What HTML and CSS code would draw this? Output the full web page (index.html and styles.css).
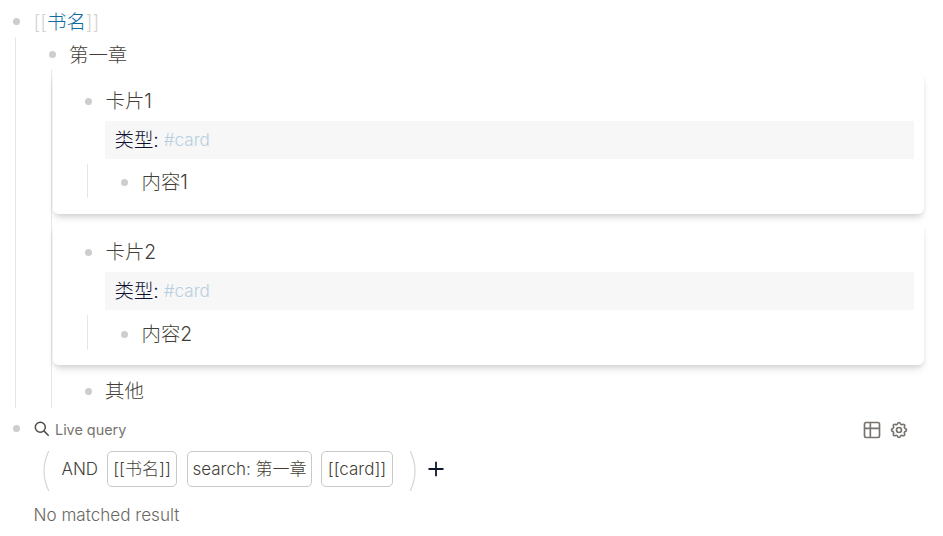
FILE: index.html
```
<!DOCTYPE html>
<html lang="zh-CN">
<head>
    <meta charset="UTF-8">
    <meta name="viewport" content="width=device-width, initial-scale=1.0">
    <title>书名</title>
    <link rel="stylesheet" href="styles.css">
</head>
<body>
    <div class="page">
        <div class="row row-top">
            <span class="bullet"></span>
            <div class="text"><span class="bracket">[[</span><a class="page-ref">书名</a><span class="bracket">]]</span></div>
        </div>
        <div class="children children-root">
            <div class="row row-chapter">
                <span class="bullet"></span>
                <div class="text">第一章</div>
            </div>
            <div class="children children-chapter">
                <div class="card">
                    <div class="row">
                        <span class="bullet"></span>
                        <div class="text">卡片1</div>
                    </div>
                    <div class="properties"><span class="key">类型:</span><a class="tag">#card</a></div>
                    <div class="children children-card">
                        <div class="row">
                            <span class="bullet"></span>
                            <div class="text">内容1</div>
                        </div>
                    </div>
                </div>
                <div class="card">
                    <div class="row">
                        <span class="bullet"></span>
                        <div class="text">卡片2</div>
                    </div>
                    <div class="properties"><span class="key">类型:</span><a class="tag">#card</a></div>
                    <div class="children children-card">
                        <div class="row row-last">
                            <span class="bullet"></span>
                            <div class="text">内容2</div>
                        </div>
                    </div>
                </div>
                <div class="row row-other">
                    <span class="bullet"></span>
                    <div class="text">其他</div>
                </div>
            </div>
        </div>

        <div class="query-head">
            <span class="bullet"></span>
            <svg class="icon-search" viewBox="0 0 16 16" width="16" height="16">
                <circle cx="6.3" cy="6.3" r="5"/>
                <path d="M9.9 9.9l4.8 4.8"/>
            </svg>
            <span class="query-title">Live query</span>
            <div class="query-tools">
                <svg class="icon" viewBox="0 0 24 24" width="20" height="20">
                    <rect x="3" y="3" width="18" height="18" rx="2"/>
                    <path d="M3 10h18M10 3v18"/>
                </svg>
                <svg class="icon" viewBox="0 0 24 24" width="20" height="20">
                    <path d="M10.325 4.317c.426-1.756 2.924-1.756 3.35 0a1.724 1.724 0 0 0 2.573 1.066c1.543-.94 3.31.826 2.37 2.37a1.724 1.724 0 0 0 1.065 2.572c1.756.426 1.756 2.924 0 3.35a1.724 1.724 0 0 0-1.066 2.573c.94 1.543-.826 3.31-2.37 2.37a1.724 1.724 0 0 0-2.572 1.065c-.426 1.756-2.924 1.756-3.35 0a1.724 1.724 0 0 0-2.573-1.066c-1.543.94-3.31-.826-2.37-2.37a1.724 1.724 0 0 0-1.065-2.572c-1.756-.426-1.756-2.924 0-3.35a1.724 1.724 0 0 0 1.066-2.573c-.94-1.543.826-3.31 2.37-2.37 1 .608 2.296.07 2.572-1.065z"/>
                    <circle cx="12" cy="12" r="3"/>
                </svg>
            </div>
        </div>
        <div class="builder">
            <svg class="paren" viewBox="0 0 7 40" width="7" height="40"><path d="M5.8 0Q-3.8 20 5.8 40"/></svg>
            <span class="operator">AND</span>
            <span class="clause clause-page">[[书名]]</span>
            <span class="clause clause-search">search: 第一章</span>
            <span class="clause clause-tag">[[card]]</span>
            <svg class="paren paren-right" viewBox="0 0 7 40" width="7" height="40"><path d="M1.2 0Q10.8 20 1.2 40"/></svg>
            <svg class="icon-plus" viewBox="0 0 16 16" width="16" height="16"><path d="M8 .7v14.6M.5 8h15"/></svg>
        </div>
        <div class="result">No matched result</div>
    </div>
</body>
</html>
```
FILE: styles.css
```
body {
    margin: 0;
    background-color: #fff;
    color: #433f38;
    font-family: Inter, "Noto Sans CJK SC", sans-serif;
    font-weight: 300;
    font-size: 19.4px;
}
.page {
    padding: 5px 19px 0 13px;
}
.row {
    display: flex;
    align-items: center;
    height: 34px;
    line-height: 34px;
}
.bullet {
    flex: none;
    width: 7px;
    height: 7px;
    margin-right: 13.5px;
    border-radius: 50%;
    background-color: #cdcdcd;
}
.text {
    white-space: nowrap;
}
.row-top {
    height: 33px;
}
.bracket {
    color: #d4d4d4;
}
.page-ref {
    color: #106ba3;
}
.children {
    border-left: 1px solid #e6e6e6;
}
.children-root {
    margin: -1px 0 0 2px;
    padding-left: 33px;
}
.row-chapter {
    margin-bottom: -1px;
    padding-top: 1px;
    height: 33px;
}
.row-chapter .bullet {
    margin-right: 13px;
}
.children-chapter {
    margin-left: 2px;
    padding: 2px 0 0 1px;
}
.card {
    box-sizing: border-box;
    height: 142px;
    margin-bottom: 9px;
    padding: 12px 10px 0 32px;
    border-radius: 6px;
    background-color: #fff;
    box-shadow: 0 6px 9px -2px rgba(0, 0, 0, 0.1), 0 3px 5px -1px rgba(0, 0, 0, 0.1);
}
.properties {
    display: flex;
    box-sizing: border-box;
    height: 38px;
    margin: 3px 0 5px 20px;
    padding-left: 9.5px;
    line-height: 38px;
    background-color: #f7f7f7;
}
.key {
    color: #0b1033;
}
.tag {
    margin-left: 5px;
    color: #b7cfe0;
    font-size: 17.1px;
}
.children-card {
    margin-left: 2px;
    padding-left: 33px;
}
.children-card .row {
    box-sizing: border-box;
    padding-top: 2px;
}
.children-card .row-last {
    height: 35px;
    padding-top: 3px;
}
.row-other {
    padding-left: 32px;
}
.row-other .bullet {
    margin-right: 13px;
}
.query-head {
    display: flex;
    align-items: center;
    height: 43px;
}
.query-head .bullet {
    margin: 0 14px 2px 0;
}
.icon-search {
    fill: none;
    stroke: #4f4b43;
    stroke-width: 1.5;
    margin: 0 5px 2px 0;
}
.query-title {
    font-size: 14.4px;
    color: #77746f;
    font-weight: 400;
}
.query-tools {
    display: flex;
    gap: 6.5px;
    margin-left: auto;
    padding-right: 15.5px;
}
.icon {
    fill: none;
    stroke: #77746f;
    stroke-width: 2;
    stroke-linejoin: round;
}
.builder {
    display: flex;
    align-items: center;
    height: 36px;
    padding-left: 30px;
    font-size: 17px;
}
.paren {
    fill: none;
    stroke: #d8d8d8;
    stroke-width: 1.3;
    margin-top: 4px;
}
.operator {
    width: 45.5px;
    margin-left: 11.5px;
}
.clause {
    box-sizing: border-box;
    height: 36px;
    line-height: 34px;
    border: 1px solid #c8c8c8;
    border-radius: 5px;
    text-align: center;
    white-space: nowrap;
}
.clause-page {
    width: 70px;
}
.clause-search {
    width: 125px;
    margin-left: 10px;
}
.clause-tag {
    width: 72px;
    margin-left: 9px;
}
.paren-right {
    margin-left: 16px;
}
.icon-plus {
    margin-left: 12px;
    stroke: #0f172a;
    stroke-width: 1.8;
}
.result {
    padding-left: 20.5px;
    margin-top: 11px;
    line-height: 34px;
    font-size: 17.1px;
    color: #6b6862;
}
```
